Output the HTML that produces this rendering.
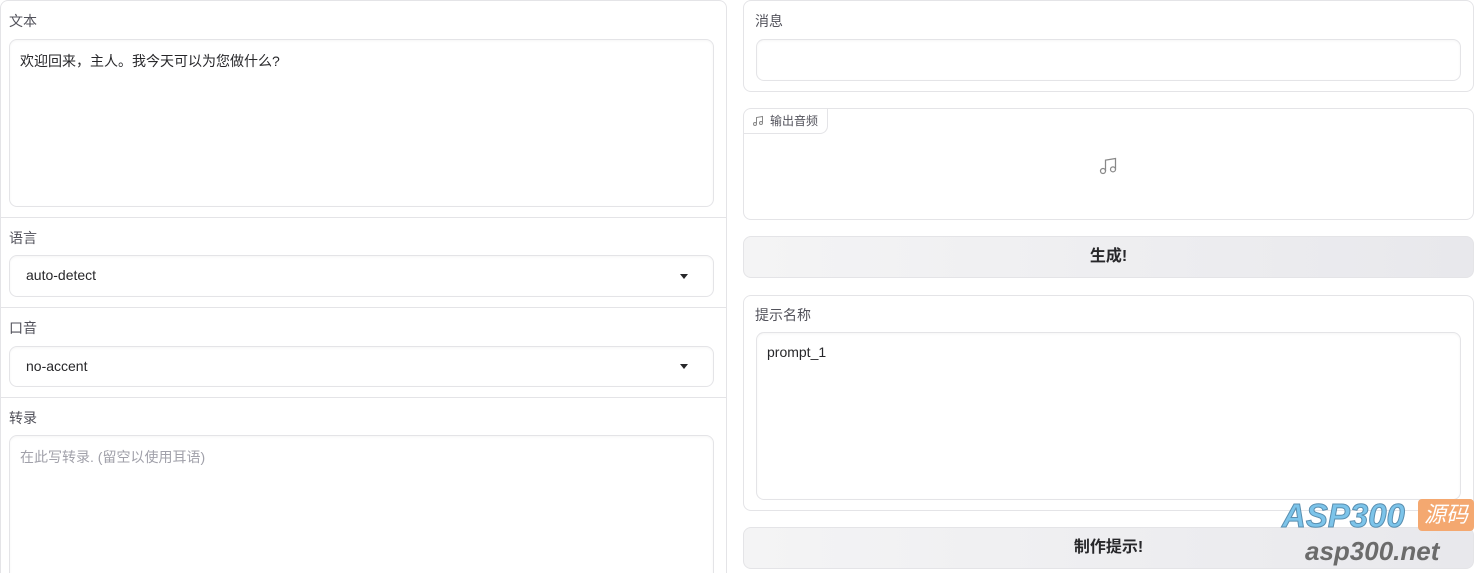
<!DOCTYPE html>
<html><head><meta charset="utf-8"><style>
*{box-sizing:border-box;margin:0;padding:0}
html,body{width:1476px;height:573px;overflow:hidden}
body{background:#fff;font-family:"Liberation Sans","Noto Sans CJK SC",sans-serif;font-size:14px;color:#27272a;position:relative}
.a{position:absolute}
.blk{border:1px solid #e4e4e7;border-radius:8px;background:#fff}
.lbl{font-size:14px;color:#52525b}
.inp{border:1px solid #e4e4e7;border-radius:8px;background:#fff;box-shadow:inset 0 1px 2px rgba(0,0,0,.04)}
.btn{border:1px solid #e4e4e7;border-radius:8px;background:linear-gradient(90deg,#f4f4f5,#e8e8ec);font-weight:bold;font-size:16px;text-align:center;color:#27272a}
.sep{height:1px;background:#e4e4e7}
.tri{width:0;height:0;border-left:4px solid transparent;border-right:4px solid transparent;border-top:5px solid #27272a}
</style></head><body>
<div class="a blk" style="left:0;top:0;width:727px;height:590px"></div>
<div class="a lbl" style="left:9px;top:11px">文本</div>
<div class="a inp" style="left:9px;top:39px;width:705px;height:168px"></div>
<div class="a" style="left:20px;top:51px">欢迎回来，主人。我今天可以为您做什么?</div>
<div class="a sep" style="left:0;top:217px;width:727px"></div>
<div class="a lbl" style="left:9px;top:228px">语言</div>
<div class="a inp" style="left:9px;top:255px;width:705px;height:42px"></div>
<div class="a" style="left:26px;top:267px">auto-detect</div>
<div class="a tri" style="left:680px;top:274px"></div>
<div class="a sep" style="left:0;top:307px;width:727px"></div>
<div class="a lbl" style="left:9px;top:318px">口音</div>
<div class="a inp" style="left:9px;top:346px;width:705px;height:41px"></div>
<div class="a" style="left:26px;top:358px">no-accent</div>
<div class="a tri" style="left:680px;top:364px"></div>
<div class="a sep" style="left:0;top:397px;width:727px"></div>
<div class="a lbl" style="left:9px;top:408px">转录</div>
<div class="a inp" style="left:9px;top:435px;width:705px;height:160px"></div>
<div class="a" style="left:20px;top:447px;color:#a1a1aa">在此写转录. (留空以使用耳语)</div>

<div class="a blk" style="left:743px;top:0;width:731px;height:92px"></div>
<div class="a lbl" style="left:755px;top:11px">消息</div>
<div class="a inp" style="left:756px;top:39px;width:705px;height:42px"></div>

<div class="a blk" style="left:743px;top:108px;width:731px;height:112px"></div>
<div class="a" style="left:743px;top:108px;width:85px;height:26px;border:1px solid #e4e4e7;border-top:none;border-left:none;border-radius:0 0 8px 0;font-size:12px;color:#52525b;padding:4px 0 0 27px">输出音频</div>
<svg class="a" style="left:752px;top:115px" width="12" height="12" viewBox="0 0 24 24" fill="none" stroke="#888" stroke-width="2"><path d="M9 18V5l12-2v13"/><circle cx="6" cy="18" r="3"/><circle cx="18" cy="16" r="3"/></svg>
<svg class="a" style="left:1098px;top:156px" width="20" height="20" viewBox="0 0 24 24" fill="none" stroke="#888" stroke-width="1.5"><path d="M9 18V5l12-2v13"/><circle cx="6" cy="18" r="3"/><circle cx="18" cy="16" r="3"/></svg>

<div class="a btn" style="left:743px;top:236px;width:731px;height:42px;line-height:40px">生成!</div>

<div class="a blk" style="left:743px;top:295px;width:731px;height:216px"></div>
<div class="a lbl" style="left:755px;top:305px">提示名称</div>
<div class="a inp" style="left:756px;top:332px;width:705px;height:168px"></div>
<div class="a" style="left:767px;top:344px">prompt_1</div>

<div class="a btn" style="left:743px;top:527px;width:731px;height:42px;line-height:40px">制作提示!</div>

<div class="a" style="left:1282px;top:497px;font-size:33px;font-style:italic;font-weight:bold;color:#7cc4ea;-webkit-text-stroke:1px #5a8fb0">ASP300</div>
<div class="a" style="left:1418px;top:499px;width:56px;height:32px;background:#f4a870;border-radius:4px;color:#fff;font-size:22px;font-style:italic;text-align:center;line-height:32px">源码</div>
<div class="a" style="left:1305px;top:536px;font-size:26px;font-style:italic;font-weight:bold;color:#6b6b6b">asp300.net</div>
</body></html>
